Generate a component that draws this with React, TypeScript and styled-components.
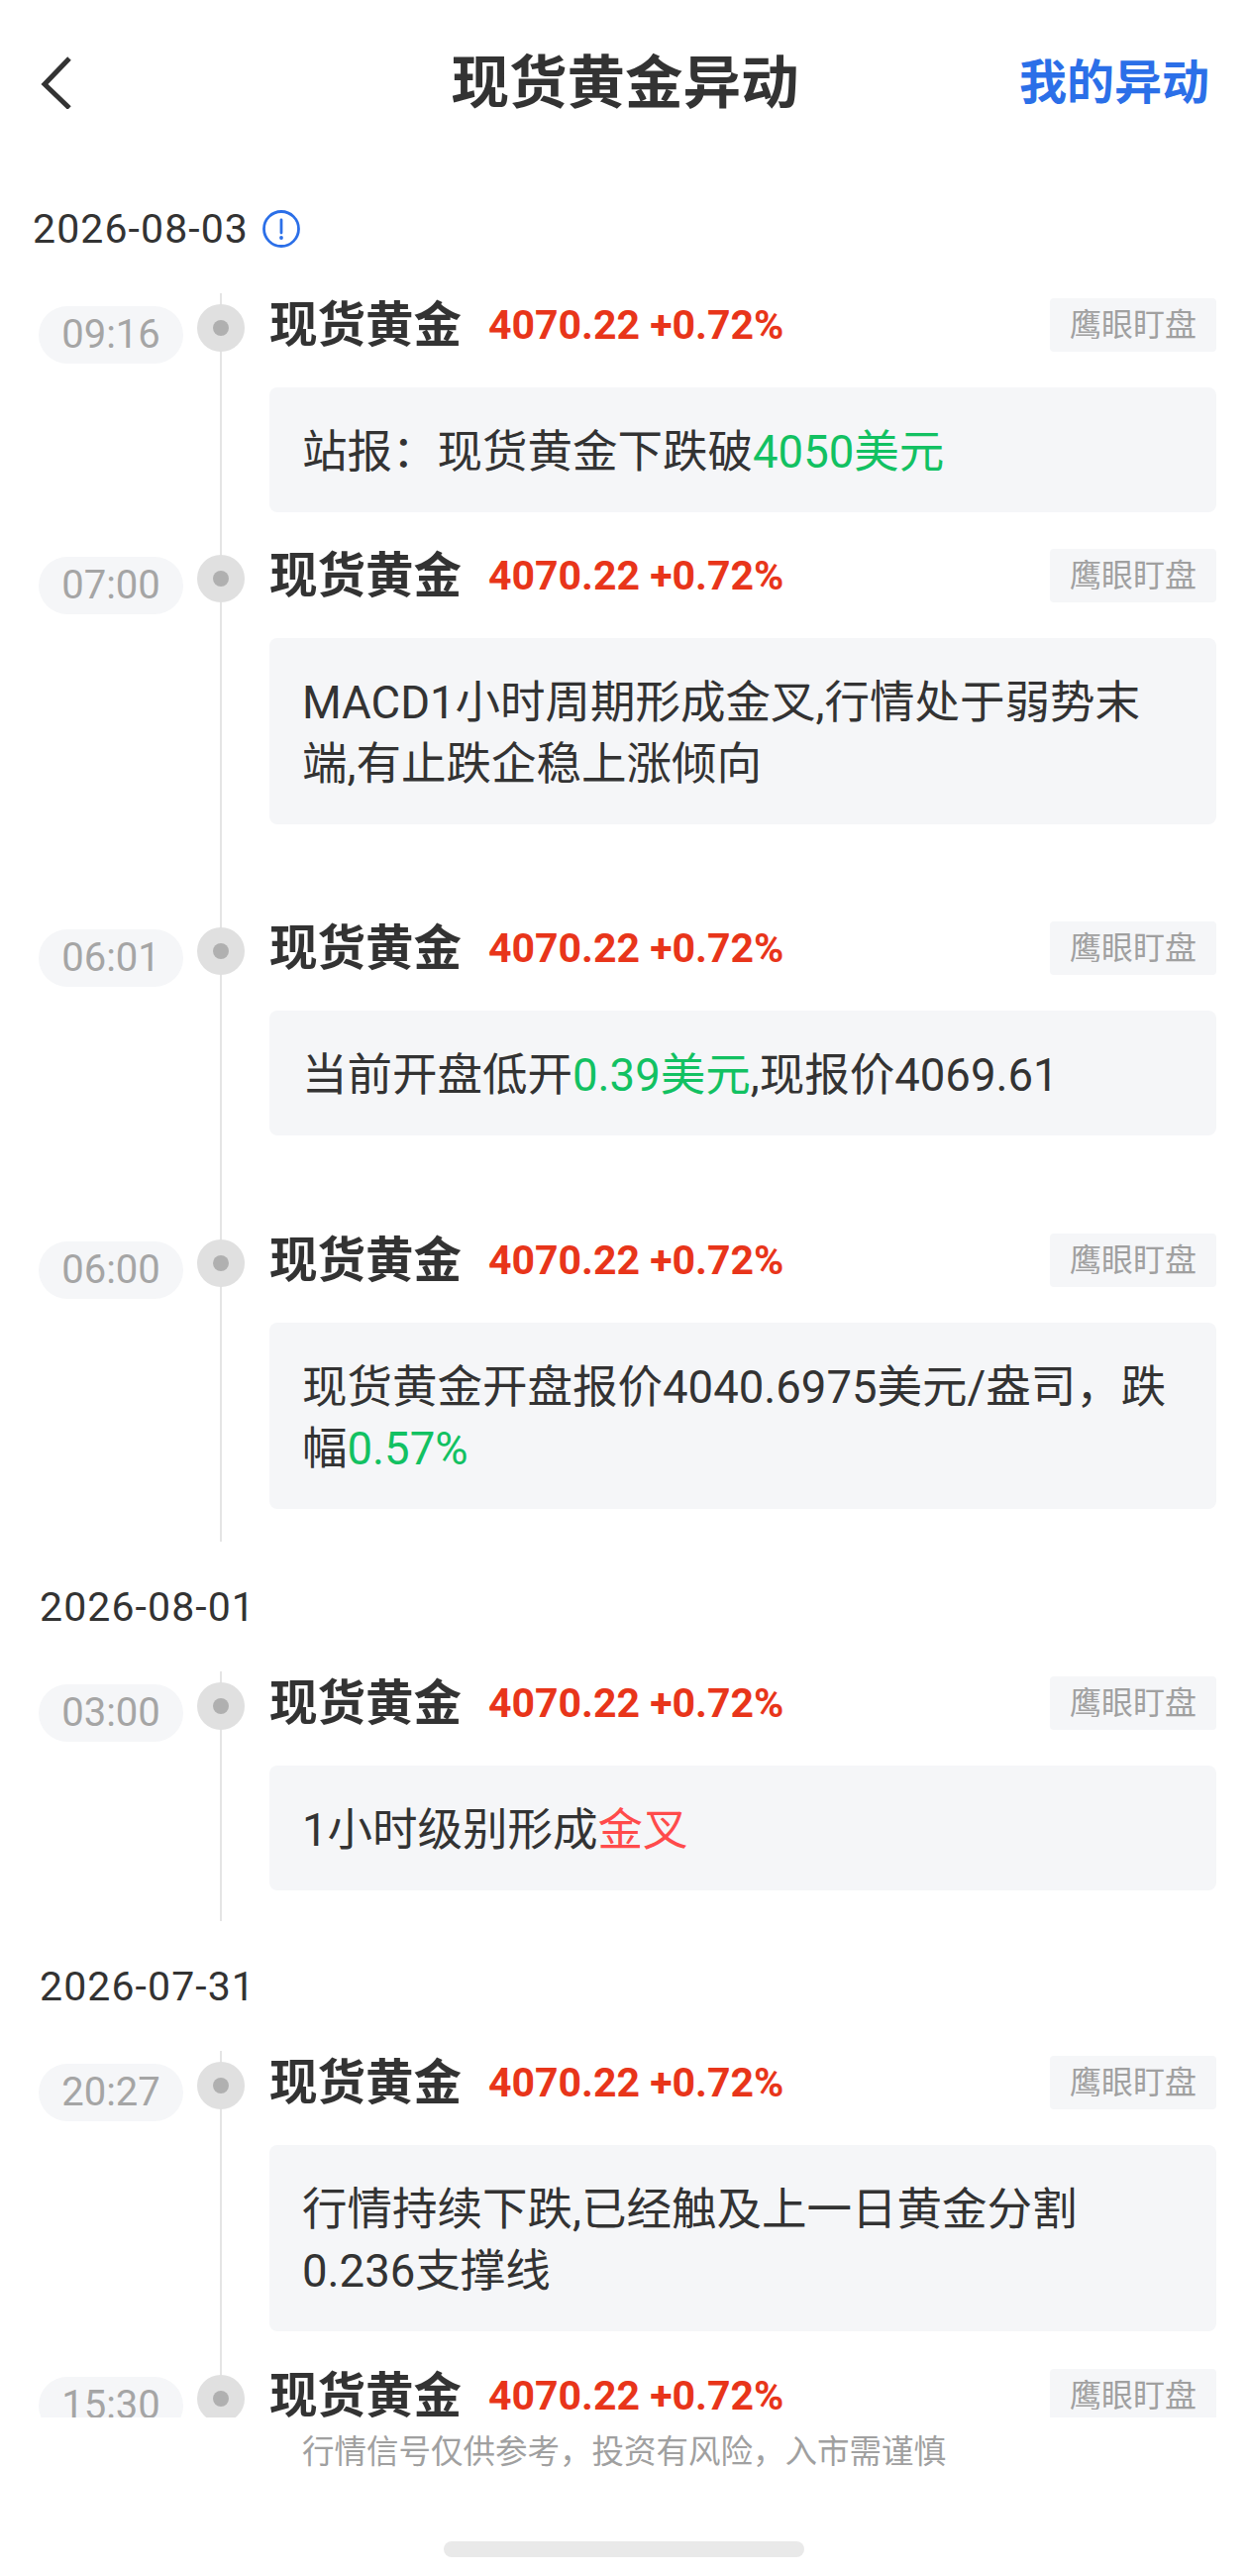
import React from "react";
import styled, { createGlobalStyle } from "styled-components";

const GlobalStyle = createGlobalStyle`
  html, body {
    margin: 0;
    padding: 0;
    background: #ffffff;
  }
  body {
    font-family: Roboto, "Noto Sans CJK SC", "Noto Sans", sans-serif;
    color: #333333;
  }
`;

const Page = styled.div`
  width: 1260px;
  height: 2600px;
  display: flex;
  flex-direction: column;
  overflow: hidden;
  background: #ffffff;
`;

const Header = styled.header`
  flex: none;
  height: 165px;
  box-sizing: border-box;
  display: grid;
  grid-template-columns: 1fr auto 1fr;
  align-items: center;
  padding: 0 39px 0 41px;
`;

const BackIcon = styled.svg`
  display: block;
  width: 32px;
  height: 54px;
`;

const Title = styled.h1`
  margin: 0;
  padding-top: 3px;
  font-size: 58.5px;
  line-height: 1;
  font-weight: 700;
  color: #333333;
`;

const MyLink = styled.a`
  justify-self: end;
  padding-top: 3px;
  font-size: 48px;
  line-height: 1;
  font-weight: 700;
  color: #2b6fe8;
`;

const Timeline = styled.main`
  flex: none;
  height: 2275px;
  overflow: hidden;
`;

const DateRow = styled.div<{ $inset: number }>`
  height: 131px;
  display: flex;
  align-items: center;
  gap: 14px;
  padding-left: ${(p) => p.$inset}px;
  font-size: 41px;
  letter-spacing: 1.1px;
  color: #333333;
`;

const InfoIcon = styled.svg`
  width: 38px;
  height: 38px;
  display: block;
`;

const Entry = styled.section`
  display: flex;
  padding-right: 32px;
`;

const TimePill = styled.div`
  flex: none;
  width: 146px;
  height: 58px;
  margin: 13px 14px 0 39px;
  border-radius: 29px;
  background: #f5f6f8;
  color: #a5a5a5;
  font-size: 40px;
  line-height: 58px;
  text-align: center;
`;

const Axis = styled.div`
  flex: none;
  width: 48px;
  padding-top: 11px;
  box-sizing: border-box;
  background: linear-gradient(#e4e4e4, #e4e4e4) no-repeat center / 2px 100%;
`;

const Dot = styled.div`
  width: 48px;
  height: 48px;
  border-radius: 50%;
  background: #e0e0e0;
  display: flex;
  align-items: center;
  justify-content: center;

  &::after {
    content: "";
    width: 16px;
    height: 16px;
    border-radius: 50%;
    background: #b0b0b0;
  }
`;

const Content = styled.div<{ $gap: number }>`
  flex: 1;
  min-width: 0;
  margin-left: 25px;
  padding: 5px 0 ${(p) => p.$gap}px;
`;

const Headline = styled.div`
  height: 54px;
  display: flex;
  align-items: center;
  margin-bottom: 36px;
`;

const Name = styled.span`
  padding-top: 2px;
  font-size: 48.5px;
  font-weight: 700;
  line-height: 54px;
  color: #333333;
`;

const Price = styled.span`
  margin-left: 27px;
  font-size: 41px;
  font-weight: 700;
  line-height: 54px;
  color: #e8351a;
`;

const Tag = styled.span`
  margin-left: auto;
  width: 168px;
  height: 54px;
  border-radius: 4px;
  background: #f5f6f8;
  color: #a0a0a0;
  font-size: 32px;
  line-height: 54px;
  text-align: center;
`;

const Card = styled.div`
  padding: 35px 38px 29px 33px;
  border-radius: 8px;
  background: #f5f6f8;
  font-size: 45.5px;
  line-height: 62px;
  color: #333333;
`;

const Mark = styled.span<{ $tone: "up" | "down" }>`
  color: ${(p) => (p.$tone === "up" ? "#ff4b4b" : "#12c162")};
`;

const Footer = styled.footer`
  flex: none;
  height: 66px;
  box-sizing: border-box;
  padding: 2px 0 0 305px;
  font-size: 32.5px;
  line-height: 66px;
  color: #a0a0a0;
`;

const HomeRow = styled.div`
  flex: none;
  display: flex;
  justify-content: center;
  padding-top: 59px;
`;

const HomeBar = styled.div`
  width: 364px;
  height: 16px;
  border-radius: 8px;
  background: #e9e9e9;
`;

type Item = { time: string; gap: number; body: React.ReactNode };
type Group = { date: string; inset: number; info?: boolean; items: Item[] };

const groups: Group[] = [
  {
    date: "2026-08-03",
    inset: 33,
    info: true,
    items: [
      {
        time: "09:16",
        gap: 32,
        body: (
          <>
            站报：现货黄金下跌破<Mark $tone="down">4050美元</Mark>
          </>
        ),
      },
      {
        time: "07:00",
        gap: 93,
        body: "MACD1小时周期形成金叉,行情处于弱势末端,有止跌企稳上涨倾向",
      },
      {
        time: "06:01",
        gap: 94,
        body: (
          <>
            当前开盘低开<Mark $tone="down">0.39美元</Mark>,现报价4069.61
          </>
        ),
      },
      {
        time: "06:00",
        gap: 33,
        body: (
          <>
            现货黄金开盘报价4040.6975美元/盎司，跌幅<Mark $tone="down">0.57%</Mark>
          </>
        ),
      },
    ],
  },
  {
    date: "2026-08-01",
    inset: 40,
    items: [
      {
        time: "03:00",
        gap: 31,
        body: (
          <>
            1小时级别形成<Mark $tone="up">金叉</Mark>
          </>
        ),
      },
    ],
  },
  {
    date: "2026-07-31",
    inset: 40,
    items: [
      {
        time: "20:27",
        gap: 33,
        body: "行情持续下跌,已经触及上一日黄金分割0.236支撑线",
      },
      { time: "15:30", gap: 34, body: "行情持续下跌" },
    ],
  },
];

export default function App() {
  return (
    <Page>
      <GlobalStyle />
      <Header>
        <BackIcon viewBox="0 0 32 54" fill="none">
          <polyline
            points="29,3 4,29 29,53"
            stroke="#333333"
            strokeWidth="5"
            strokeLinecap="butt"
            strokeLinejoin="miter"
          />
        </BackIcon>
        <Title>现货黄金异动</Title>
        <MyLink>我的异动</MyLink>
      </Header>
      <Timeline>
        {groups.map((group) => (
          <React.Fragment key={group.date}>
            <DateRow $inset={group.inset}>
              {group.date}
              {group.info && (
                <InfoIcon viewBox="0 0 38 38" fill="none">
                  <circle cx="19" cy="19" r="17.5" stroke="#2b6fe8" strokeWidth="2.8" />
                  <path d="M19 10v13" stroke="#2b6fe8" strokeWidth="2.8" strokeLinecap="round" />
                  <circle cx="19" cy="28" r="1.9" fill="#2b6fe8" />
                </InfoIcon>
              )}
            </DateRow>
            {group.items.map((item) => (
              <Entry key={item.time}>
                <TimePill>{item.time}</TimePill>
                <Axis>
                  <Dot />
                </Axis>
                <Content $gap={item.gap}>
                  <Headline>
                    <Name>现货黄金</Name>
                    <Price>4070.22 +0.72%</Price>
                    <Tag>鹰眼盯盘</Tag>
                  </Headline>
                  <Card>{item.body}</Card>
                </Content>
              </Entry>
            ))}
          </React.Fragment>
        ))}
      </Timeline>
      <Footer>行情信号仅供参考，投资有风险，入市需谨慎</Footer>
      <HomeRow>
        <HomeBar />
      </HomeRow>
    </Page>
  );
}
